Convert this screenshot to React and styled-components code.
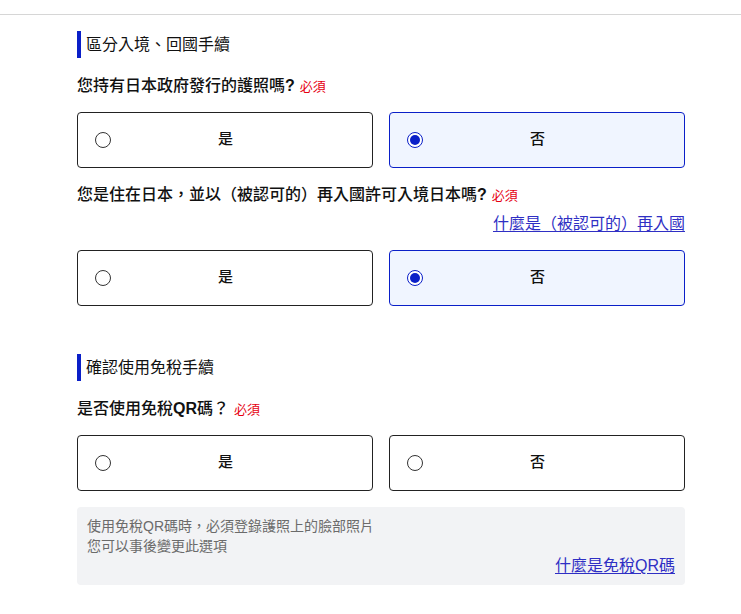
import React, { useState } from "react";
import styled, { createGlobalStyle } from "styled-components";

const GlobalStyle = createGlobalStyle`
  body {
    margin: 0;
    background: #fff;
    font-family: "Liberation Sans", "Noto Sans CJK TC", sans-serif;
    color: #111;
  }
`;

const TopBar = styled.div`
  height: 14px;
  border-bottom: 1px solid #d6d6d6;
`;

const Main = styled.main`
  width: 608px;
  margin-left: 77px;
  padding-top: 16px;
`;

const Section = styled.section`
  margin-bottom: ${(p) => p.gap || 0}px;
`;

const Heading = styled.h2`
  margin: 0 0 16px;
  border-left: 4px solid #0a1fc8;
  padding-left: 5px;
  height: 27px;
  line-height: 27px;
  font-size: 16px;
  font-weight: 400;
`;

const Question = styled.div`
  font-size: 16px;
  font-weight: 500;
  line-height: 24px;
  height: 24px;
  margin-bottom: 14px;

  b {
    font-weight: 700;
  }
`;

const Required = styled.span`
  color: #e60012;
  font-size: 13px;
  font-weight: 400;
  line-height: 1;
  margin-left: 5px;
`;

const Options = styled.div`
  display: grid;
  grid-template-columns: 1fr 1fr;
  gap: 16px;
  margin-bottom: ${(p) => p.gap ?? 15}px;
`;

const OptionBox = styled.button`
  display: grid;
  grid-template-columns: 16px 1fr 16px;
  align-items: center;
  height: 56px;
  padding: 0 16px 0 17px;
  border: 1px solid ${(p) => (p.checked ? "#0a1fc8" : "#222")};
  border-radius: 4px;
  background: ${(p) => (p.checked ? "#f0f5ff" : "#fff")};
  font-family: inherit;
  color: #111;
  cursor: pointer;
`;

const Radio = styled.span`
  width: 16px;
  height: 16px;
  box-sizing: border-box;
  border-radius: 50%;
  border: ${(p) => (p.checked ? "1.5px solid #0a1fc8" : "1px solid #333")};
  background: #fff;
  display: flex;
  align-items: center;
  justify-content: center;
  &::after {
    content: "";
    width: 10px;
    height: 10px;
    border-radius: 50%;
    background: ${(p) => (p.checked ? "#0a1fc8" : "transparent")};
  }
`;

const OptionLabel = styled.span`
  font-family: "Noto Sans CJK TC", sans-serif;
  font-size: 15px;
  font-weight: 500;
  line-height: 20px;
  margin-bottom: 4px;
  text-align: center;
`;

const LinkRow = styled.div`
  display: flex;
  justify-content: flex-end;
  height: 24px;
  line-height: 24px;
  margin: -9px 0 14px;
`;

const HelpLink = styled.a`
  color: #2f2fc4;
  font-size: 16px;
  text-decoration: underline;
  text-underline-offset: 2px;
`;

const InfoBox = styled.div`
  background: #f2f3f5;
  border-radius: 4px;
  padding: 9px 10px 9px;
  font-size: 14px;
  line-height: 20px;
  color: #6b6b6b;
`;

const InfoLink = styled.div`
  display: flex;
  justify-content: flex-end;
  height: 20px;
  line-height: 20px;
`;

const Choice = ({ value, onChange }) => (
  <>
    {["是", "否"].map((label, i) => {
      const checked = value === i;
      return (
        <OptionBox key={label} checked={checked} onClick={() => onChange(i)}>
          <Radio checked={checked} />
          <OptionLabel>{label}</OptionLabel>
          <span />
        </OptionBox>
      );
    })}
  </>
);

const App = () => {
  const [passport, setPassport] = useState(1);
  const [reentry, setReentry] = useState(1);
  const [qr, setQr] = useState(null);

  return (
    <>
      <GlobalStyle />
      <TopBar />
      <Main>
        <Section gap={48}>
          <Heading>區分入境、回國手續</Heading>
          <Question>
            您持有日本政府發行的護照嗎<b>?</b>
            <Required>必須</Required>
          </Question>
          <Options>
            <Choice value={passport} onChange={setPassport} />
          </Options>
          <Question>
            您是住在日本，並以（被認可的）再入國許可入境日本嗎<b>?</b>
            <Required>必須</Required>
          </Question>
          <LinkRow>
            <HelpLink href="#">什麼是（被認可的）再入國</HelpLink>
          </LinkRow>
          <Options gap={0}>
            <Choice value={reentry} onChange={setReentry} />
          </Options>
        </Section>
        <Section>
          <Heading>確認使用免稅手續</Heading>
          <Question>
            是否使用免稅<b>QR</b>碼？<Required>必須</Required>
          </Question>
          <Options gap={16}>
            <Choice value={qr} onChange={setQr} />
          </Options>
          <InfoBox>
            使用免稅QR碼時，必須登錄護照上的臉部照片
            <br />
            您可以事後變更此選項
            <InfoLink>
              <HelpLink href="#">什麼是免稅QR碼</HelpLink>
            </InfoLink>
          </InfoBox>
        </Section>
      </Main>
    </>
  );
};

export default App;
